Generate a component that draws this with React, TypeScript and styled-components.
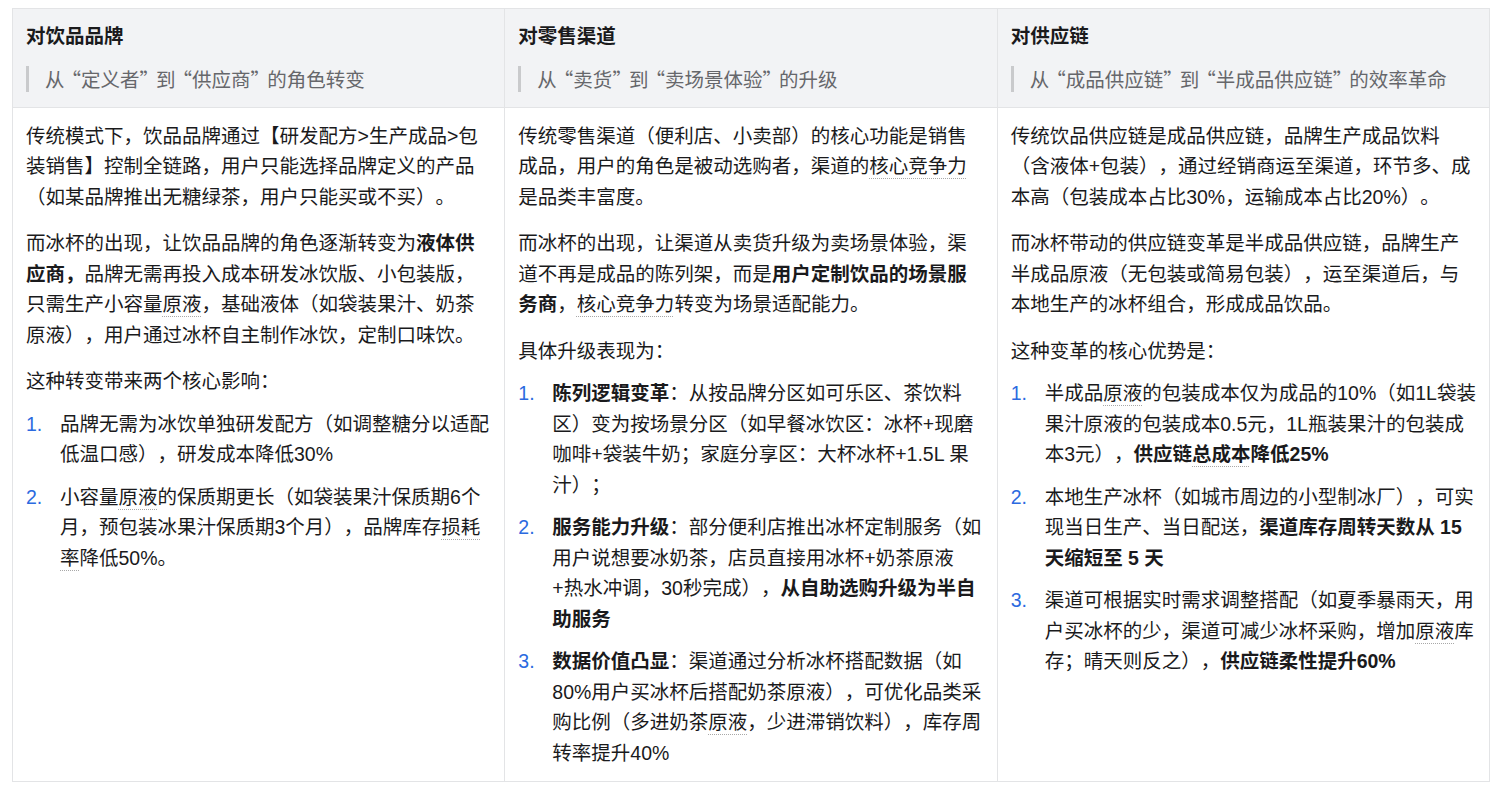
import React from 'react'
import styled, { createGlobalStyle } from 'styled-components'

const GlobalStyle = createGlobalStyle`
  html, body {
    margin: 0;
    padding: 0;
    background: #ffffff;
  }
  body {
    font-family: "Liberation Sans", "Noto Sans CJK SC", sans-serif;
    color: #1a1a1c;
    text-spacing-trim: space-all;
  }
`

const Page = styled.div`
  padding: 8px 16px 0 12px;
`

const Table = styled.table`
  width: 100%;
  table-layout: fixed;
  border-collapse: collapse;
  border: 1px solid #e3e4e6;
  font-size: 19.5px;
  line-height: 30.5px;
`

const HeadCell = styled.th`
  background: #f2f3f5;
  border: 1px solid #e3e4e6;
  padding: 12px 13px 15px;
  text-align: left;
  vertical-align: top;
  font-weight: normal;
`

const Title = styled.div`
  font-weight: 600;
`

const Subtitle = styled.blockquote`
  margin: 14px 0 0;
  padding: 0 0 0 16px;
  border-left: 3px solid #c9cacc;
  font-family: "Noto Sans CJK SC", sans-serif;
  color: #66676b;
  line-height: 26px;
`

// curly quotes are a bit narrower in the reference font
const Quote = styled.span<{ $open?: boolean }>`
  margin-left: ${({ $open }) => ($open ? '-3px' : '0')};
  margin-right: ${({ $open }) => ($open ? '0' : '-3px')};
`

const BodyCell = styled.td`
  border: 1px solid #e3e4e6;
  padding: 13px 13px 13px;
  vertical-align: top;
`

const Para = styled.p<{ $lead?: boolean }>`
  margin: 0 0 ${({ $lead }) => ($lead ? '12px' : '16px')};
`

const List = styled.ol`
  list-style: none;
  margin: 0;
  padding: 0;
`

const Item = styled.li`
  display: grid;
  grid-template-columns: 34px 1fr;
  margin-bottom: 12px;

  &:last-child {
    margin-bottom: 0;
  }
`

const Marker = styled.span`
  color: #2b6ae0;
`

const Note = styled.span`
  text-decoration: underline dotted #a8a8a8;
  text-underline-offset: 5px;
  text-decoration-thickness: 1px;
`

const Strong = styled.b`
  font-weight: 700;
`

const Row = ({ n, children }: { n: number; children: React.ReactNode }) => (
  <Item>
    <Marker>{n}.</Marker>
    <span>{children}</span>
  </Item>
)

const Quoted = ({ children }: { children: React.ReactNode }) => (
  <>
    <Quote $open>“</Quote>
    {children}
    <Quote>”</Quote>
  </>
)

const App = () => {
  return (
    <Page>
      <GlobalStyle />
      <Table>
        <thead>
          <tr>
            <HeadCell>
              <Title>对饮品品牌</Title>
              <Subtitle>
                从<Quoted>定义者</Quoted>到<Quoted>供应商</Quoted>的角色转变
              </Subtitle>
            </HeadCell>
            <HeadCell>
              <Title>对零售渠道</Title>
              <Subtitle>
                从<Quoted>卖货</Quoted>到<Quoted>卖场景体验</Quoted>的升级
              </Subtitle>
            </HeadCell>
            <HeadCell>
              <Title>对供应链</Title>
              <Subtitle>
                从<Quoted>成品供应链</Quoted>到<Quoted>半成品供应链</Quoted>的效率革命
              </Subtitle>
            </HeadCell>
          </tr>
        </thead>
        <tbody>
          <tr>
            <BodyCell>
              <Para>
                传统模式下，饮品品牌通过【研发配方&gt;生产成品&gt;包装销售】控制全链路，用户只能选择品牌定义的产品（如某品牌推出无糖绿茶，用户只能买或不买）。
              </Para>
              <Para>
                而冰杯的出现，让饮品品牌的角色逐渐转变为<Strong>液体供应商，</Strong>品牌无需再投入成本研发冰饮版、小包装版，只需生产小容量<Note>原液</Note>，基础液体（如袋装果汁、奶茶原液），用户通过冰杯自主制作冰饮，定制口味饮。
              </Para>
              <Para $lead>这种转变带来两个核心影响：</Para>
              <List>
                <Row n={1}>品牌无需为冰饮单独研发配方（如调整糖分以适配低温口感），研发成本降低30%</Row>
                <Row n={2}>
                  小容量<Note>原液</Note>的保质期更长（如袋装果汁保质期6个月，预包装冰果汁保质期3个月），品牌库存<Note>损耗率</Note>降低50%。
                </Row>
              </List>
            </BodyCell>
            <BodyCell>
              <Para>
                传统零售渠道（便利店、小卖部）的核心功能是销售成品，用户的角色是被动选购者，渠道的<Note>核心竞争力</Note>是品类丰富度。
              </Para>
              <Para>
                而冰杯的出现，让渠道从卖货升级为卖场景体验，渠道不再是成品的陈列架，而是<Strong>用户定制饮品的场景服务商</Strong>，<Note>核心竞争力</Note>转变为场景适配能力。
              </Para>
              <Para $lead>具体升级表现为：</Para>
              <List>
                <Row n={1}>
                  <Strong>陈列逻辑变革</Strong>：从按品牌分区如可乐区、茶饮料区）变为按场景分区（如早餐冰饮区：冰杯+现磨咖啡+袋装牛奶；家庭分享区：大杯冰杯+1.5L 果汁）；
                </Row>
                <Row n={2}>
                  <Strong>服务能力升级</Strong>：部分便利店推出冰杯定制服务（如用户说想要冰奶茶，店员直接用冰杯+奶茶原液+热水冲调，30秒完成），<Strong>从自助选购升级为半自助服务</Strong>
                </Row>
                <Row n={3}>
                  <Strong>数据价值凸显</Strong>：渠道通过分析冰杯搭配数据（如80%用户买冰杯后搭配奶茶原液），可优化品类采购比例（多进奶茶<Note>原液</Note>，少进滞销饮料），库存周转率提升40%
                </Row>
              </List>
            </BodyCell>
            <BodyCell>
              <Para>
                传统饮品供应链是成品供应链，品牌生产成品饮料（含液体+包装），通过经销商运至渠道，环节多、成本高（包装成本占比30%，运输成本占比20%）。
              </Para>
              <Para>
                而冰杯带动的供应链变革是半成品供应链，品牌生产半成品原液（无包装或简易包装），运至渠道后，与本地生产的冰杯组合，形成成品饮品。
              </Para>
              <Para $lead>这种变革的核心优势是：</Para>
              <List>
                <Row n={1}>
                  半成品<Note>原液</Note>的包装成本仅为成品的10%（如1L袋装果汁原液的包装成本0.5元，1L瓶装果汁的包装成本3元），<Strong>供应链<Note>总成本</Note>降低25%</Strong>
                </Row>
                <Row n={2}>
                  本地生产冰杯（如城市周边的小型制冰厂），可实现当日生产、当日配送，<Strong>渠道库存周转天数从 15 天缩短至 5 天</Strong>
                </Row>
                <Row n={3}>
                  渠道可根据实时需求调整搭配（如夏季暴雨天，用户买冰杯的少，渠道可减少冰杯采购，增加<Note>原液</Note>库存；晴天则反之），<Strong>供应链柔性提升60%</Strong>
                </Row>
              </List>
            </BodyCell>
          </tr>
        </tbody>
      </Table>
    </Page>
  )
}

export default App
